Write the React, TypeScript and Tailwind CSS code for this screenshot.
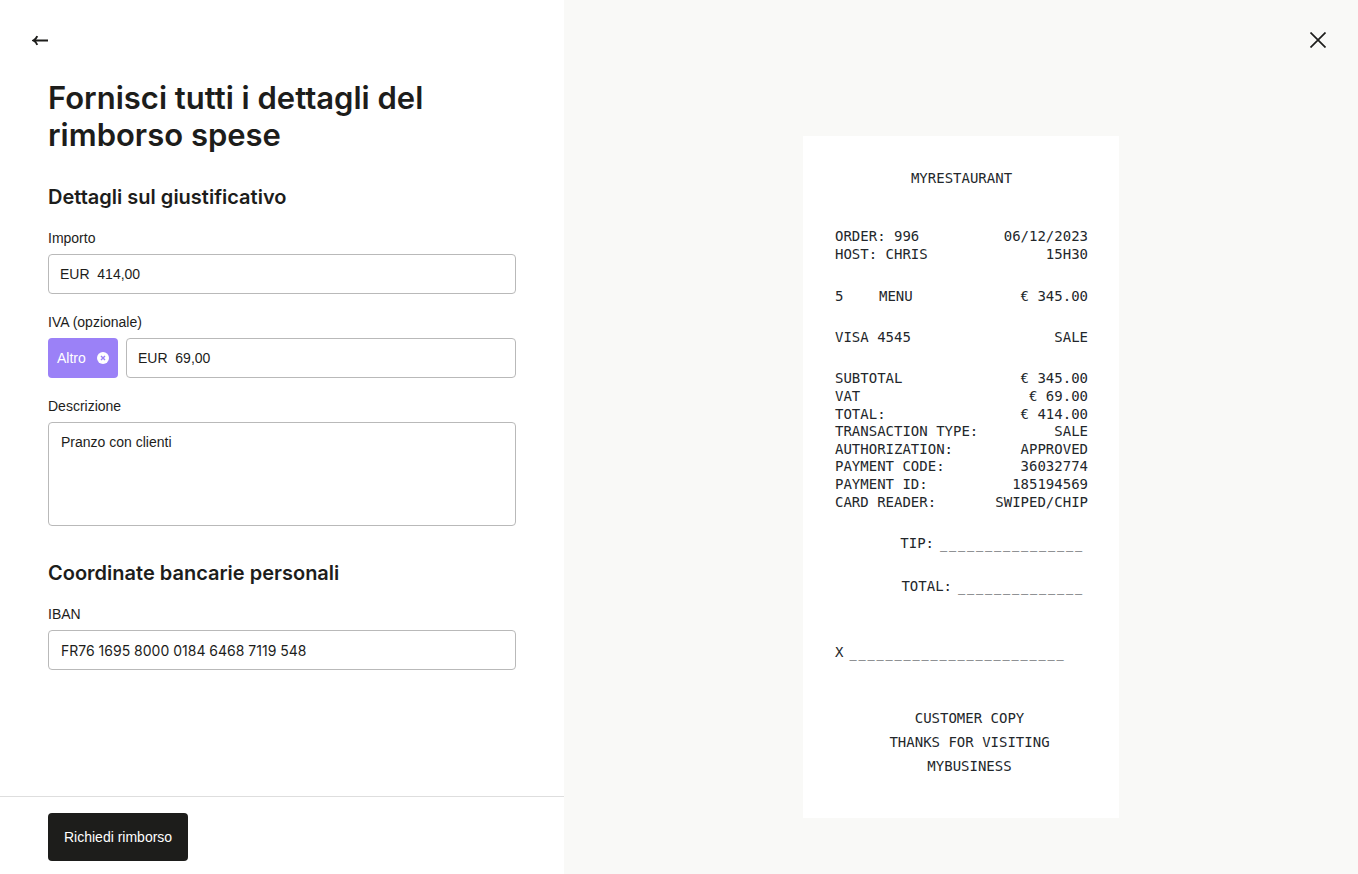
import { useState } from "react";

const inputClass =
  "h-10 w-full rounded-[4px] border border-[#b9b9b9] bg-white text-sm text-[#1d1d1b] outline-none focus:border-[#1d1d1b]";

const payment = [
  ["SUBTOTAL", "€ 345.00"],
  ["VAT", "€ 69.00"],
  ["TOTAL:", "€ 414.00"],
  ["TRANSACTION TYPE:", "SALE"],
  ["AUTHORIZATION:", "APPROVED"],
  ["PAYMENT CODE:", "36032774"],
  ["PAYMENT ID:", "185194569"],
  ["CARD READER:", "SWIPED/CHIP"],
];

const Blank = ({ length }: { length: number }) => {
  return (
    <span className="-mb-1 flex gap-[2px] pt-1 font-['Liberation_Mono',monospace] text-xs leading-[18px] text-[#55585c]">
      {Array.from({ length }, (_, i) => (
        <span key={i} className="w-[7px]">
          _
        </span>
      ))}
    </span>
  );
};

const Receipt = () => {
  return (
    <div className="w-[316px] bg-white px-[31px] pt-[33px] pb-10 pl-8 font-['DejaVu_Sans_Mono',monospace] text-sm leading-[18px] text-[#23272b]">
      <p className="text-center">MYRESTAURANT</p>
      <div className="mt-10 flex justify-between">
        <span>ORDER: 996</span>
        <span>06/12/2023</span>
      </div>
      <div className="flex justify-between">
        <span>HOST: CHRIS</span>
        <span>15H30</span>
      </div>
      <div className="mt-6 flex">
        <span className="w-11">5</span>
        <span>MENU</span>
        <span className="ml-auto">€ 345.00</span>
      </div>
      <div className="mt-[23px] flex justify-between">
        <span>VISA 4545</span>
        <span>SALE</span>
      </div>
      <table className="mt-6 h-[141px] w-full leading-[17px]">
        <tbody>
          {payment.map(([name, value]) => (
            <tr key={name}>
              <td className="p-0">{name}</td>
              <td className="p-0 text-right">{value}</td>
            </tr>
          ))}
        </tbody>
      </table>
      <div className="mt-[23px] flex justify-end gap-1.5 pr-1.5">
        TIP:
        <Blank length={16} />
      </div>
      <div className="mt-[25px] flex justify-end gap-1.5 pr-1.5">
        TOTAL:
        <Blank length={14} />
      </div>
      <div className="mt-12 flex gap-1.5">
        X
        <Blank length={24} />
      </div>
      <div className="mt-[45px] pl-4 text-center leading-6">
        <p>CUSTOMER COPY</p>
        <p>THANKS FOR VISITING</p>
        <p>MYBUSINESS</p>
      </div>
    </div>
  );
};

const App = () => {
  const [hasVat, setHasVat] = useState(true);

  return (
    <main className="grid min-h-screen grid-cols-[564fr_794fr] bg-white font-['Liberation_Sans',sans-serif] text-sm text-[#1d1d1b]">
      <div className="flex flex-col">
        <header className="flex h-[79px] items-center px-7">
          <button type="button" aria-label="Indietro" className="p-1">
            <svg
              className="block h-4 w-4"
              viewBox="0 0 16 16"
              fill="none"
              stroke="currentColor"
              strokeWidth="1.9"
            >
              <path d="M16 8.5H1.5M5.3 4.2C4.6 6 3.2 7.6 1.2 8.5c2 .9 3.4 2.5 4.1 4.3" />
            </svg>
          </button>
        </header>
        <form
          id="refund"
          className="flex-1 px-12"
          onSubmit={(e) => e.preventDefault()}
        >
          <h1 className="font-['Inter',sans-serif] text-[31px] leading-[37px] font-semibold">
            Fornisci tutti i dettagli del rimborso spese
          </h1>
          <h2 className="mt-7 font-['Inter',sans-serif] text-xl leading-8 font-semibold">
            Dettagli sul giustificativo
          </h2>
          <label htmlFor="amount" className="mt-[15px] block">
            Importo
          </label>
          <div className="mt-1.5">
            <input
              id="amount"
              className={`${inputClass} px-[11px]`}
              defaultValue={"EUR  414,00"}
            />
          </div>
          <label htmlFor="vat" className="mt-4.5 block">
            IVA (opzionale)
          </label>
          <div className="mt-1.5 flex gap-2">
            {hasVat && (
              <button
                type="button"
                className="flex h-10 w-[70px] shrink-0 items-center justify-between rounded-[4px] bg-[#9b81f7] px-[9px] text-white"
                onClick={() => setHasVat(false)}
              >
                Altro
                <svg className="h-3 w-3" viewBox="0 0 12 12">
                  <circle cx="6" cy="6" r="6" fill="#fff" />
                  <path
                    d="m4 4 4 4M8 4 4 8"
                    stroke="#9b81f7"
                    strokeWidth="1.4"
                  />
                </svg>
              </button>
            )}
            <input
              id="vat"
              className={`${inputClass} px-[11px]`}
              defaultValue={"EUR  69,00"}
            />
          </div>
          <label htmlFor="description" className="mt-4.5 block">
            Descrizione
          </label>
          <textarea
            id="description"
            className="mt-1.5 block h-26 w-full resize-none rounded-[4px] border border-[#b9b9b9] bg-white px-3 py-[9px] outline-none focus:border-[#1d1d1b]"
            defaultValue="Pranzo con clienti"
          />
          <h2 className="mt-[31px] font-['Inter',sans-serif] text-xl leading-8 font-semibold">
            Coordinate bancarie personali
          </h2>
          <label htmlFor="iban" className="mt-[15px] block">
            IBAN
          </label>
          <input
            id="iban"
            className={`${inputClass} mt-1.5 px-3 font-['Inter',sans-serif]`}
            defaultValue="FR76 1695 8000 0184 6468 7119 548"
          />
        </form>
        <footer className="border-t border-[#dedede] px-12 pt-4 pb-[13px]">
          <button
            type="submit"
            form="refund"
            className="h-12 rounded-[4px] bg-[#1d1d1b] px-4 text-white"
          >
            Richiedi rimborso
          </button>
        </footer>
      </div>
      <aside className="flex flex-col bg-[#f9f9f7]">
        <header className="flex h-20 items-center justify-end px-7">
          <button type="button" aria-label="Chiudi" className="p-1">
            <svg
              className="block h-4 w-4"
              viewBox="0 0 16 16"
              stroke="currentColor"
              strokeWidth="1.7"
            >
              <path d="m.5.5 15 15M15.5.5l-15 15" />
            </svg>
          </button>
        </header>
        <div className="flex flex-1 items-center justify-center">
          <Receipt />
        </div>
      </aside>
    </main>
  );
};

export default App;
